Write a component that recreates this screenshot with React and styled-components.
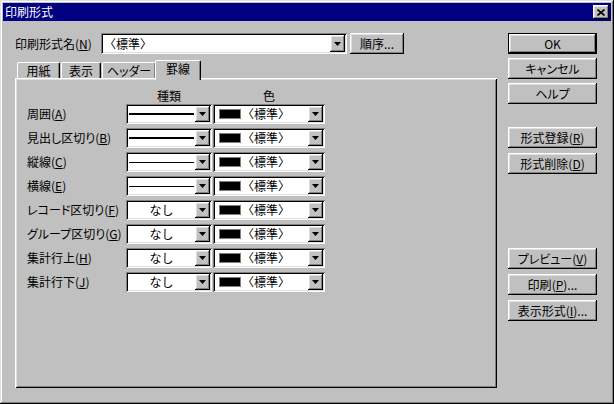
import React from "react";
import styled, { createGlobalStyle, css } from "styled-components";

const GlobalStyle = createGlobalStyle`
  html, body {
    margin: 0;
    padding: 0;
    background: #c0c0c0;
  }
  body {
    font-family: "Noto Sans CJK JP", "Noto Sans", sans-serif;
    font-size: 12px;
    color: #000;
  }
`;

const raised = css`
  background: #c0c0c0;
  box-shadow: inset -1px -1px #000, inset 1px 1px #fff,
    inset -2px -2px #808080, inset 2px 2px #dfdfdf;
`;

const Window = styled.div`
  width: 614px;
  height: 404px;
  box-sizing: border-box;
  padding: 3px;
  background: #c0c0c0;
  box-shadow: inset -1px -1px #000, inset 1px 1px #dfdfdf,
    inset -2px -2px #808080, inset 2px 2px #fff;
  display: flex;
  flex-direction: column;
`;

const TitleBar = styled.div`
  height: 18px;
  background: #000080;
  color: #fff;
  display: flex;
  align-items: center;
  justify-content: space-between;
  padding: 0 2px;
  line-height: 12px;
`;

const TitleText = styled.span`
  font-feature-settings: "palt";
`;

const CloseButton = styled.div`
  ${raised};
  width: 16px;
  height: 14px;
  display: flex;
  align-items: center;
  justify-content: center;
`;

const Body = styled.div`
  display: flex;
  padding: 12px 0 0 12px;
`;

const LeftCol = styled.div`
  width: 482px;
  display: flex;
  flex-direction: column;
`;

const TopRow = styled.div`
  display: flex;
  align-items: center;
  height: 21px;
`;

const FieldLabel = styled.div`
  width: 86px;
  line-height: 12px;
  font-feature-settings: "palt";
`;

const Combo = styled.div`
  width: ${(p) => p.$w}px;
  height: ${(p) => p.$h || 20}px;
  box-sizing: border-box;
  padding: 2px;
  background: #fff;
  box-shadow: inset 1px 1px #808080, inset -1px -1px #fff,
    inset 2px 2px #000, inset -2px -2px #dfdfdf;
  display: flex;
`;

const ComboValue = styled.div`
  flex: 1;
  display: flex;
  align-items: center;
  justify-content: ${(p) => (p.$center ? "center" : "flex-start")};
  padding-left: ${(p) => p.$pad || 0}px;
  line-height: 12px;
  white-space: nowrap;
  overflow: hidden;
`;

const DropButton = styled.div`
  ${raised};
  width: 15px;
  display: flex;
  align-items: center;
  justify-content: center;
`;

const PushButton = styled.div`
  ${raised};
  box-sizing: border-box;
  width: ${(p) => p.$w || 89}px;
  height: 21px;
  display: flex;
  align-items: center;
  justify-content: center;
  line-height: 12px;
  font-feature-settings: "palt";
  white-space: nowrap;
  ${(p) =>
    p.$default &&
    css`
      border: 1px solid #000;
    `}
`;

const SideButton = styled(PushButton)`
  margin-left: 3px;
`;

const TabStrip = styled.div`
  height: 24px;
  display: flex;
  align-items: flex-end;
  padding-left: 2px;
`;

const Tab = styled.div`
  box-sizing: border-box;
  width: ${(p) => p.$w}px;
  height: 16px;
  margin-right: 1px;
  background: #c0c0c0;
  border-left: 1px solid #fff;
  border-top: 1px solid #fff;
  border-right: 1px solid #000;
  border-radius: 2px 2px 0 0;
  box-shadow: inset -1px 0 #808080;
  display: flex;
  align-items: center;
  justify-content: center;
  line-height: 12px;
  font-feature-settings: "palt";
  ${(p) =>
    p.$active &&
    css`
      position: relative;
      z-index: 1;
      height: 20px;
      margin: 0 -2px -2px -2px;
      padding-bottom: 3px;
    `}
`;

const Panel = styled.div`
  height: 310px;
  box-sizing: border-box;
  padding: 12px 0 0 12px;
  box-shadow: inset 1px 1px #fff, inset -1px -1px #000,
    inset 2px 2px #dfdfdf, inset -2px -2px #808080;
`;

const Grid = styled.div`
  display: grid;
  grid-template-columns: 98px 86px 112px;
  column-gap: 1px;
`;

const HeaderGrid = styled(Grid)`
  line-height: 12px;
  height: 12px;
`;

const HeadCell = styled.div`
  text-align: center;
`;

const RowsGrid = styled(Grid)`
  margin-top: 2px;
  grid-auto-rows: 20px;
  row-gap: 4px;
`;

const RowLabel = styled.div`
  display: flex;
  align-items: center;
  line-height: 12px;
  white-space: nowrap;
  font-feature-settings: "palt";
`;

const LineSample = styled.div`
  flex: 1;
  align-self: center;
  height: ${(p) => (p.$thick ? 2 : 1)}px;
  background: #000;
  margin: 0 1px;
`;

const Swatch = styled.div`
  width: 22px;
  height: 10px;
  box-sizing: border-box;
  background: #000;
  border: 1px solid #808080;
  margin: 0 1px 0 4px;
`;

const RightCol = styled.div`
  margin-left: 11px;
  width: 89px;
  display: flex;
  flex-direction: column;
`;

const ButtonGroup = styled.div`
  display: flex;
  flex-direction: column;
  gap: ${(p) => p.$gap || 5}px;
  margin-top: ${(p) => p.$top || 0}px;
`;

const Arrow = () => (
  <svg width="7" height="4" viewBox="0 0 7 4">
    <polygon points="0,0 7,0 3.5,4" fill="#000" />
  </svg>
);

const CloseIcon = () => (
  <svg width="8" height="7" viewBox="0 0 8 7">
    <path d="M0.5 0.5 L7.5 6.5 M7.5 0.5 L0.5 6.5" stroke="#000" strokeWidth="1.6" />
  </svg>
);

const rows = [
  { label: "周囲", key: "A", kind: "thick" },
  { label: "見出し区切り", key: "B", kind: "thick" },
  { label: "縦線", key: "C", kind: "thin" },
  { label: "横線", key: "E", kind: "thin" },
  { label: "レコード区切り", key: "F", kind: "none" },
  { label: "グループ区切り", key: "G", kind: "none" },
  { label: "集計行上", key: "H", kind: "none" },
  { label: "集計行下", key: "J", kind: "none" },
];

const Mn = ({ text, k, after = "" }) => (
  <>
    {text}(<u>{k}</u>){after}
  </>
);

export default function App() {
  return (
    <>
      <GlobalStyle />
      <Window>
        <TitleBar>
          <TitleText>印刷形式</TitleText>
          <CloseButton>
            <CloseIcon />
          </CloseButton>
        </TitleBar>
        <Body>
          <LeftCol>
            <TopRow>
              <FieldLabel>
                <Mn text="印刷形式名" k="N" />
              </FieldLabel>
              <Combo $w={246} $h={21}>
                <ComboValue $pad={1}>〈標準〉</ComboValue>
                <DropButton>
                  <Arrow />
                </DropButton>
              </Combo>
              <SideButton $w={54}>順序...</SideButton>
            </TopRow>
            <TabStrip>
              <Tab $w={43}>用紙</Tab>
              <Tab $w={40}>表示</Tab>
              <Tab $w={54}>ヘッダー</Tab>
              <Tab $w={46} $active>
                罫線
              </Tab>
            </TabStrip>
            <Panel>
              <HeaderGrid>
                <div />
                <HeadCell>種類</HeadCell>
                <HeadCell>色</HeadCell>
              </HeaderGrid>
              <RowsGrid>
                {rows.map((r) => (
                  <React.Fragment key={r.key}>
                    <RowLabel>
                      <Mn text={r.label} k={r.key} />
                    </RowLabel>
                    <Combo $w={86}>
                      {r.kind === "none" ? (
                        <ComboValue $center>なし</ComboValue>
                      ) : (
                        <LineSample $thick={r.kind === "thick"} />
                      )}
                      <DropButton>
                        <Arrow />
                      </DropButton>
                    </Combo>
                    <Combo $w={112}>
                      <ComboValue>
                        <Swatch />
                        〈標準〉
                      </ComboValue>
                      <DropButton>
                        <Arrow />
                      </DropButton>
                    </Combo>
                  </React.Fragment>
                ))}
              </RowsGrid>
            </Panel>
          </LeftCol>
          <RightCol>
            <ButtonGroup $gap={4}>
              <PushButton $default>OK</PushButton>
              <PushButton>キャンセル</PushButton>
              <PushButton>ヘルプ</PushButton>
            </ButtonGroup>
            <ButtonGroup $top={23}>
              <PushButton>
                <Mn text="形式登録" k="R" />
              </PushButton>
              <PushButton>
                <Mn text="形式削除" k="D" />
              </PushButton>
            </ButtonGroup>
            <ButtonGroup $top={74}>
              <PushButton>
                <Mn text="プレビュー" k="V" />
              </PushButton>
              <PushButton>
                <Mn text="印刷" k="P" after="..." />
              </PushButton>
              <PushButton>
                <Mn text="表示形式" k="I" after="..." />
              </PushButton>
            </ButtonGroup>
          </RightCol>
        </Body>
      </Window>
    </>
  );
}
